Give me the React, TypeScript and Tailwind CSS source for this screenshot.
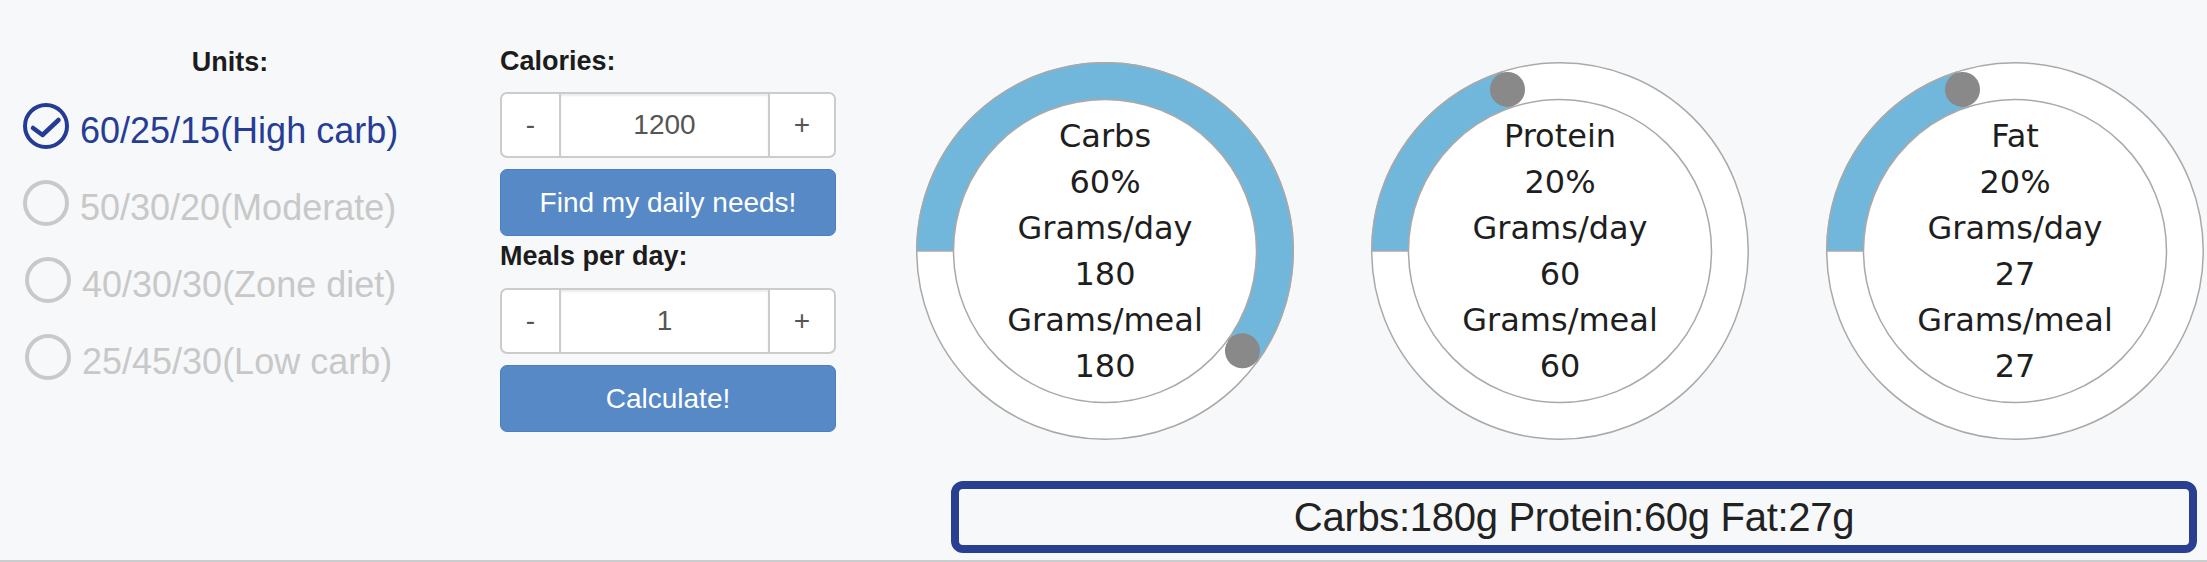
import { useState } from "react";

interface Macro {
  name: string;
  pct: number;
  perDay: number;
  perMeal: number;
}

const plans = [
  "60/25/15(High carb)",
  "50/30/20(Moderate)",
  "40/30/30(Zone diet)",
  "25/45/30(Low carb)",
];

const macros: Macro[] = [
  { name: "Carbs", pct: 60, perDay: 180, perMeal: 180 },
  { name: "Protein", pct: 20, perDay: 60, perMeal: 60 },
  { name: "Fat", pct: 20, perDay: 27, perMeal: 27 },
];

const SIZE = 378;
const C = SIZE / 2;
const R_OUT = 188.25;
const R_IN = 151.5;
const R_MID = (R_OUT + R_IN) / 2;

// angle in degrees, clockwise from 12 o'clock
const pt = (r: number, deg: number) => {
  const a = (deg * Math.PI) / 180;
  return [C + r * Math.sin(a), C - r * Math.cos(a)];
};

const sector = (pct: number) => {
  const start = 270;
  const end = start + pct * 3.6;
  const large = pct * 3.6 > 180 ? 1 : 0;
  const [x0, y0] = pt(R_OUT, start);
  const [x1, y1] = pt(R_OUT, end);
  const [x2, y2] = pt(R_IN, end);
  const [x3, y3] = pt(R_IN, start);
  return `M${x0} ${y0} A${R_OUT} ${R_OUT} 0 ${large} 1 ${x1} ${y1} L${x2} ${y2} A${R_IN} ${R_IN} 0 ${large} 0 ${x3} ${y3} Z`;
};

const Ring = ({ macro }: { macro: Macro }) => {
  const [kx, ky] = pt(R_MID, 270 + macro.pct * 3.6);
  return (
    <div className="relative w-[378px] h-[378px] shrink-0">
      <svg className="absolute inset-0" width={SIZE} height={SIZE} viewBox={`0 0 ${SIZE} ${SIZE}`}>
        <circle cx={C} cy={C} r={R_OUT} fill="#ffffff" stroke="#a9a9a9" strokeWidth={1.5} />
        <path d={sector(macro.pct)} fill="#71b7db" stroke="#a9a9a9" strokeWidth={1.5} />
        <circle cx={C} cy={C} r={R_IN} fill="#ffffff" stroke="#a9a9a9" strokeWidth={1.5} />
        <circle cx={kx} cy={ky} r={17.5} fill="#898989" />
      </svg>
      <div className="relative h-full flex flex-col items-center justify-center text-[32px] leading-[46px] text-[#1e1e1e] font-['DejaVu_Sans',Verdana,sans-serif]">
        <div>{macro.name}</div>
        <div>{macro.pct}%</div>
        <div>Grams/day</div>
        <div>{macro.perDay}</div>
        <div>Grams/meal</div>
        <div>{macro.perMeal}</div>
      </div>
    </div>
  );
};

const Stepper = ({ value }: { value: number }) => (
  <div className="flex h-[66px] w-[336px] border-2 border-[#cccccc] rounded-[7px] bg-white text-[28px] text-[#555555]">
    <button className="w-[59px] flex items-center justify-center border-r-2 border-[#cccccc]">-</button>
    <div className="flex-1 flex items-center justify-center shadow-[inset_0_2px_2px_rgba(0,0,0,0.08)]">
      {value}
    </div>
    <button className="w-[66px] flex items-center justify-center border-l-2 border-[#cccccc]">+</button>
  </div>
);

const BlueButton = ({ label }: { label: string }) => (
  <button className="h-[67px] w-[336px] rounded-[7px] bg-[#5689c6] border border-[#4b7fc0] text-white text-[28px]">
    {label}
  </button>
);

export default function App() {
  const [plan, setPlan] = useState(0);

  return (
    <div className="h-[562px] w-full bg-[#f7f8fa] flex flex-col font-['Liberation_Sans',Arial,sans-serif] overflow-hidden">
      <div className="flex-1">
        <div className="flex">
          {/* plans */}
          <div className="w-[500px] shrink-0">
            <div className="w-[460px] text-center font-bold text-[27px] leading-[31px] text-[#1c1c1c] mt-[47px]">
              Units:
            </div>
            <div className="flex flex-col gap-[26px] mt-[25px] pl-[23px]">
              {plans.map((p, i) => {
                const on = i === plan;
                return (
                  <div
                    key={p}
                    onClick={() => setPlan(i)}
                    className={`flex items-start gap-[11px] cursor-pointer ${i >= 2 ? "ml-[2px]" : ""}`}
                  >
                    <svg width="46" height="46" viewBox="0 0 46 46" className="shrink-0">
                      <circle
                        cx="23"
                        cy="23"
                        r="21"
                        fill="none"
                        stroke={on ? "#243c93" : "#c9c9c9"}
                        strokeWidth="4"
                      />
                      {on && (
                        <polyline
                          points="10,25 19.5,32 35.5,17"
                          fill="none"
                          stroke="#243c93"
                          strokeWidth="4.5"
                          strokeLinecap="round"
                          strokeLinejoin="round"
                        />
                      )}
                    </svg>
                    <span
                      className={`text-[36px] leading-[46px] mt-[5px] whitespace-nowrap ${
                        on ? "text-[#263d96]" : "text-[#c8c8c8]"
                      }`}
                    >
                      {p}
                    </span>
                  </div>
                );
              })}
            </div>
          </div>

          {/* calories */}
          <div className="w-[336px] shrink-0 flex flex-col">
            <div className="font-bold text-[27px] leading-[31px] text-[#1c1c1c] mt-[46px]">Calories:</div>
            <div className="mt-[15px]">
              <Stepper value={1200} />
            </div>
            <div className="mt-[11px]">
              <BlueButton label="Find my daily needs!" />
            </div>
            <div className="font-bold text-[27px] leading-[31px] text-[#1c1c1c] mt-[5px]">Meals per day:</div>
            <div className="mt-[16px]">
              <Stepper value={1} />
            </div>
            <div className="mt-[11px]">
              <BlueButton label="Calculate!" />
            </div>
          </div>

          {/* rings */}
          <div className="flex gap-[77px] ml-[80px] pt-[62px]">
            {macros.map((m) => (
              <Ring key={m.name} macro={m} />
            ))}
          </div>
        </div>

        <div className="ml-[951px] mt-[41px] w-[1246px] h-[72px] border-[8px] border-[#283f92] rounded-[12px] flex items-center justify-center text-[40px] leading-[56px] text-[#222222] tracking-[-0.3px]">
          Carbs:{macros[0].perDay}g Protein:{macros[1].perDay}g Fat:{macros[2].perDay}g
        </div>
      </div>
      <div className="h-[2px] bg-[#cbcccd]" />
    </div>
  );
}
